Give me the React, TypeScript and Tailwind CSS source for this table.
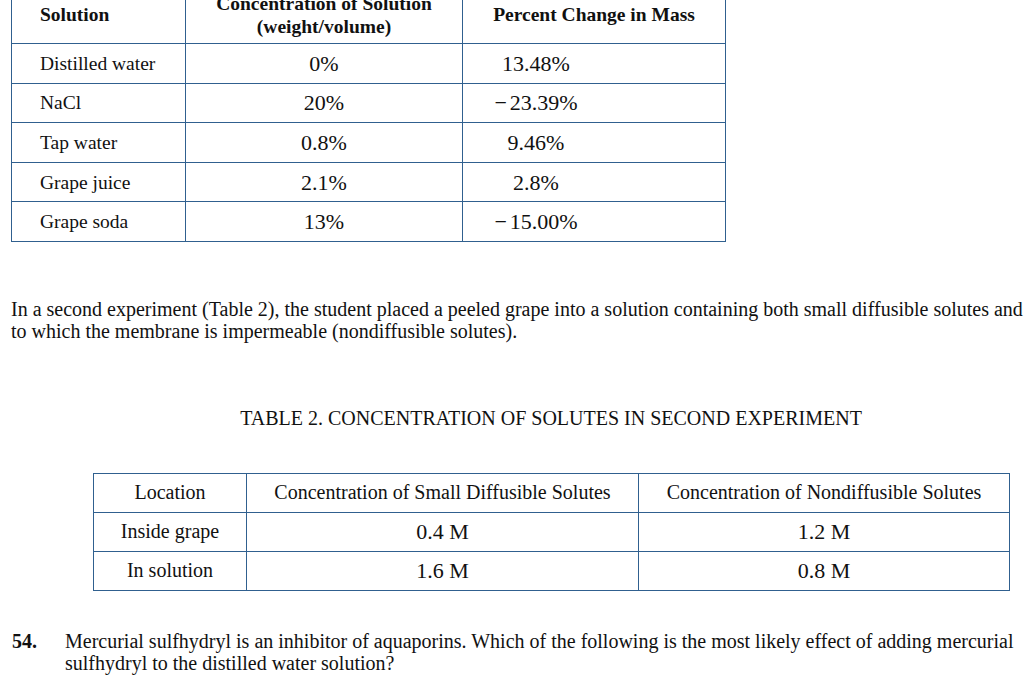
const serif = { fontFamily: '"Liberation Serif", "Times New Roman", serif' };

const table1 = [
  { solution: "Distilled water", conc: "0%", change: "13.48%" },
  { solution: "NaCl", conc: "20%", change: "\u221223.39%" },
  { solution: "Tap water", conc: "0.8%", change: "9.46%" },
  { solution: "Grape juice", conc: "2.1%", change: "2.8%" },
  { solution: "Grape soda", conc: "13%", change: "\u221215.00%" },
];

const table2 = [
  { location: "Inside grape", small: "0.4 M", nondiff: "1.2 M" },
  { location: "In solution", small: "1.6 M", nondiff: "0.8 M" },
];

const cell = "border-[1.5px] border-[#30608f]";

export default function App() {
  return (
    <div
      className="w-[1029px] h-[683px] overflow-hidden bg-white text-[#111] text-[20px] leading-[23px]"
      style={serif}
    >
      <table className="ml-[11px] -mt-[15px] table-fixed border-collapse w-[714px] text-[19.5px]">
        <colgroup>
          <col className="w-[174px]" />
          <col className="w-[277px]" />
          <col className="w-[263px]" />
        </colgroup>
        <thead>
          <tr className="h-[58px]">
            <th className={`${cell} pl-[28px] text-left font-bold`}>Solution</th>
            <th className={`${cell} text-center font-bold`}>
              Concentration of Solution
              <br />
              (weight/volume)
            </th>
            <th className={`${cell} text-center font-bold`}>Percent Change in Mass</th>
          </tr>
        </thead>
        <tbody>
          {table1.map((row) => (
            <tr key={row.solution} className="h-[39.6px]">
              <td className={`${cell} pl-[28px]`}>{row.solution}</td>
              <td className={`${cell} text-center text-[22px]`}>{row.conc}</td>
              <td className={`${cell} text-center pr-[116px] text-[22px]`}>
                {row.change.startsWith("\u2212") ? (
                  <>
                    <span className="mr-[3px]">{"\u2212"}</span>
                    {row.change.slice(1)}
                  </>
                ) : (
                  row.change
                )}
              </td>
            </tr>
          ))}
        </tbody>
      </table>

      <p className="mt-[56px] ml-[11px] whitespace-nowrap leading-[22px]">
        In a second experiment (Table 2), the student placed a peeled grape into a solution
        containing both small diffusible solutes and
        <br />
        to which the membrane is impermeable (nondiffusible solutes).
      </p>

      <div className="ml-[93px] w-[916px]">
        <h3 className="mt-[65px] text-center leading-[23px]">
          TABLE 2. CONCENTRATION OF SOLUTES IN SECOND EXPERIMENT
        </h3>
        <table className="mt-[43px] table-fixed border-collapse w-[916px]">
          <colgroup>
            <col className="w-[153px]" />
            <col className="w-[392px]" />
            <col className="w-[371px]" />
          </colgroup>
          <thead>
            <tr className="h-[39px]">
              <th className={`${cell} font-normal text-center`}>Location</th>
              <th className={`${cell} font-normal text-center`}>
                Concentration of Small Diffusible Solutes
              </th>
              <th className={`${cell} font-normal text-center`}>
                Concentration of Nondiffusible Solutes
              </th>
            </tr>
          </thead>
          <tbody>
            {table2.map((row) => (
              <tr key={row.location} className="h-[39px]">
                <td className={`${cell} text-center`}>{row.location}</td>
                <td className={`${cell} text-center text-[22px]`}>{row.small}</td>
                <td className={`${cell} text-center text-[22px]`}>{row.nondiff}</td>
              </tr>
            ))}
          </tbody>
        </table>
      </div>

      <div className="mt-[39px] ml-[12px] flex leading-[22px] whitespace-nowrap">
        <span className="w-[53px] shrink-0 font-bold">54.</span>
        <p>
          Mercurial sulfhydryl is an inhibitor of aquaporins. Which of the following is the most
          likely effect of adding mercurial
          <br />
          sulfhydryl to the distilled water solution?
        </p>
      </div>
    </div>
  );
}
